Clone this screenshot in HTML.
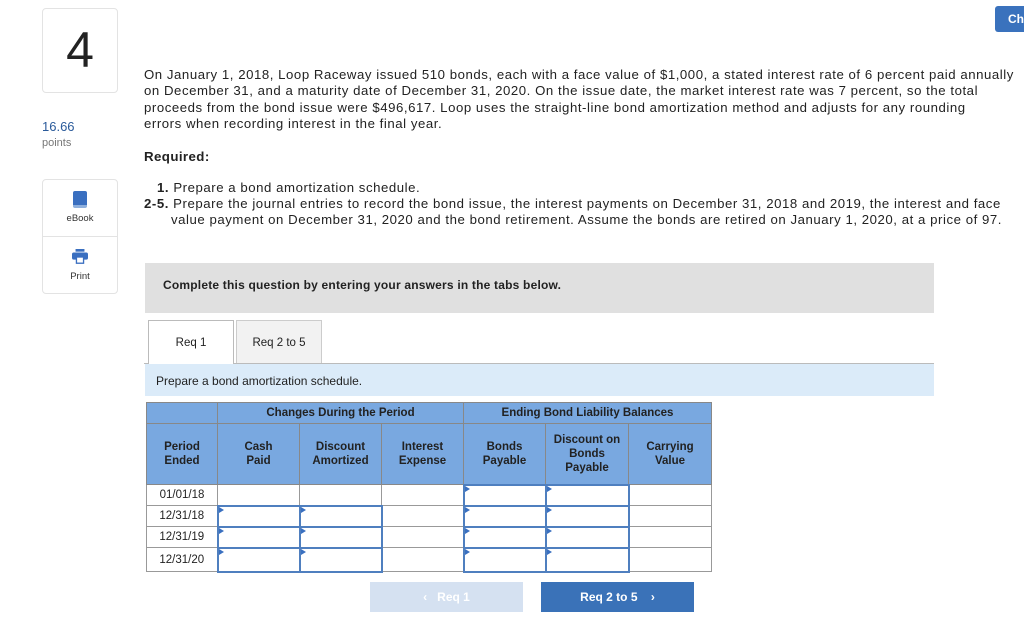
<!DOCTYPE html>
<html><head><meta charset="utf-8"><style>
*{margin:0;padding:0;box-sizing:border-box}
body{width:1024px;height:639px;background:#fff;position:relative;overflow:hidden;font-family:"Liberation Sans",sans-serif;color:#222}
.a{position:absolute}
.box{border:1px solid #e3e3e3;border-radius:4px}
p.q,.q{font-size:13.2px;line-height:16.3px;color:#222;letter-spacing:0.55px;white-space:nowrap}
table{border-collapse:collapse;position:absolute;left:146px;top:402px;font-size:11.5px}
td{border:1px solid #999;text-align:center;padding:0}
th{background:#79a8e0;border:1px solid #888;font-weight:bold;font-size:11.5px;color:#222;line-height:14px}
.in{border:2px solid #4f7fbf;position:relative}
.in:before{content:"";position:absolute;left:0;top:0;border-left:5px solid #3a70c0;border-top:3px solid transparent;border-bottom:3px solid transparent}
.dt{font-size:11.5px;color:#222}
</style></head><body>
<div class="a box" style="left:42px;top:8px;width:76px;height:85px;"><div style="font-size:50px;text-align:center;line-height:82px;color:#222">4</div></div>
<div class="a" style="left:42px;top:119px;font-size:13px;color:#2a5a9a">16.66</div>
<div class="a" style="left:42px;top:137px;font-size:11px;color:#777">points</div>
<div class="a box" style="left:42px;top:179px;width:76px;height:115px;overflow:hidden">
 <div style="height:57px;border-bottom:1px solid #e3e3e3;text-align:center;overflow:hidden">
  <div style="margin:11px auto 0;width:14px;height:17px;background:#3a6fc0;border-radius:2px;border-bottom:3px solid #8fb0dd"></div>
  <div style="font-size:9.5px;margin-top:5px;color:#333">eBook</div></div>
 <div style="text-align:center;">
  <svg width="18" height="16" viewBox="0 0 20 18" style="margin-top:12px"><rect x="5" y="0" width="10" height="3" fill="#3a6fc0"/><rect x="1" y="4" width="18" height="8" rx="2" fill="#3a6fc0"/><rect x="6" y="9" width="8" height="7" fill="#fff" stroke="#3a6fc0" stroke-width="1.5"/></svg>
  <div style="font-size:9.5px;color:#333;margin-top:1px">Print</div></div>
</div>
<div class="a" style="left:995px;top:6px;width:40px;height:26px;background:#3a72bd;border-radius:3px;color:#fff;font-weight:bold;font-size:12px;line-height:26px;padding-left:13px">Ch</div>
<p class="a q" style="left:144px;top:67px">On January 1, 2018, Loop Raceway issued 510 bonds, each with a face value of $1,000, a stated interest rate of 6 percent paid annually<br>on December 31, and a maturity date of December 31, 2020. On the issue date, the market interest rate was 7 percent, so the total<br>proceeds from the bond issue were $496,617. Loop uses the straight-line bond amortization method and adjusts for any rounding<br>errors when recording interest in the final year.</p>
<div class="a" style="left:144px;top:149px;font-size:13.3px;font-weight:bold;letter-spacing:0.4px">Required:</div>
<div class="a q" style="left:157px;top:180px"><b>1.</b> Prepare a bond amortization schedule.</div>
<p class="a q" style="left:144px;top:196px"><b>2-5.</b> Prepare the journal entries to record the bond issue, the interest payments on December 31, 2018 and 2019, the interest and face<br><span style="padding-left:27px">value payment on December 31, 2020 and the bond retirement. Assume the bonds are retired on January 1, 2020, at a price of 97.</span></p>
<div class="a" style="left:145px;top:263px;width:789px;height:50px;background:#e0e0e0;font-weight:bold;font-size:12px;padding:15px 0 0 18px;letter-spacing:0.2px">Complete this question by entering your answers in the tabs below.</div>
<div class="a" style="left:144px;top:363px;width:790px;border-top:1px solid #bbb"></div>
<div class="a" style="left:148px;top:320px;width:86px;height:45px;background:#fff;border:1px solid #bbb;border-bottom:none;font-size:11.5px;text-align:center;line-height:44px">Req 1</div>
<div class="a" style="left:236px;top:320px;width:86px;height:43px;background:#f2f2f2;border:1px solid #ccc;border-bottom:none;font-size:11.5px;text-align:center;line-height:44px">Req 2 to 5</div>
<div class="a" style="left:145px;top:364px;width:789px;height:32px;background:#dbebf9;font-size:12px;line-height:34px;padding-left:11px">Prepare a bond amortization schedule.</div>
<table>
<tr style="height:21px"><th style="width:71px"></th><th colspan="3">Changes During the Period</th><th colspan="3">Ending Bond Liability Balances</th></tr>
<tr style="height:61px"><th>Period<br>Ended</th><th style="width:82px">Cash<br>Paid</th><th style="width:82px">Discount<br>Amortized</th><th style="width:82px">Interest<br>Expense</th><th style="width:82px">Bonds<br>Payable</th><th style="width:83px">Discount on<br>Bonds<br>Payable</th><th style="width:83px">Carrying<br>Value</th></tr>
<tr style="height:21px"><td class="dt">01/01/18</td><td></td><td></td><td></td><td class="in"></td><td class="in"></td><td></td></tr>
<tr style="height:21px"><td class="dt">12/31/18</td><td class="in"></td><td class="in"></td><td></td><td class="in"></td><td class="in"></td><td></td></tr>
<tr style="height:21px"><td class="dt">12/31/19</td><td class="in"></td><td class="in"></td><td></td><td class="in"></td><td class="in"></td><td></td></tr>
<tr style="height:24px"><td class="dt">12/31/20</td><td class="in"></td><td class="in"></td><td></td><td class="in"></td><td class="in"></td><td></td></tr>
</table>
<div class="a" style="left:370px;top:582px;width:153px;height:30px;background:#d5e1f1;color:#fff;font-weight:bold;font-size:12px;text-align:center;line-height:30px">&lsaquo;&nbsp;&nbsp; Req 1</div>
<div class="a" style="left:541px;top:582px;width:153px;height:30px;background:#3a72b8;color:#fff;font-weight:bold;font-size:12px;text-align:center;line-height:30px">Req 2 to 5&nbsp;&nbsp;&nbsp; &rsaquo;</div>
</body></html>
